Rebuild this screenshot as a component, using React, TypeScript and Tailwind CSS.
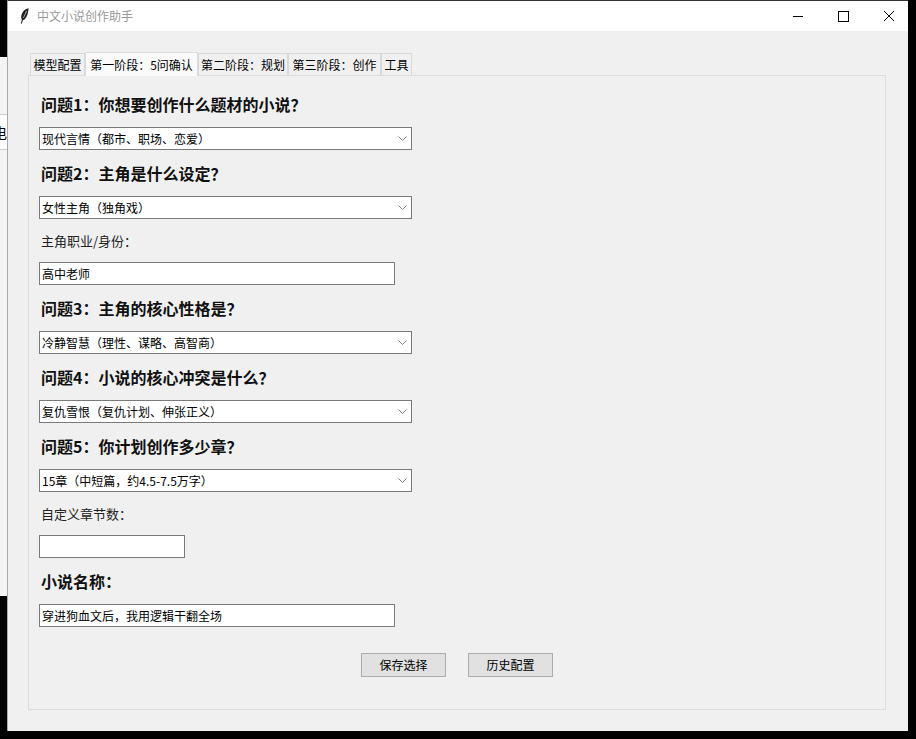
import type { ReactNode } from 'react';

const font = { cjk: 'font-["Noto_Sans_CJK_SC","Liberation_Sans",sans-serif]' };

function Heading({ children }: { children: ReactNode }) {
  return <div className="h-[22px] mt-[12px] mb-[12px] ml-[2px] text-[16px] leading-[22px] font-bold text-[#111]">{children}</div>;
}

function Label({ children }: { children: ReactNode }) {
  return <div className="h-[18px] mt-[13px] mb-[12px] ml-[2px] text-[13px] leading-[18px] text-[#222]">{children}</div>;
}

function Select({ value }: { value: string }) {
  return (
    <div className="w-[373px] h-[23px] shrink-0 flex items-center justify-between bg-white border border-[#7a7a7a] pl-[2px] pr-[4px] text-[12px] text-black">
      <span>{value}</span>
      <svg width="9" height="5" viewBox="0 0 9 5" fill="none" stroke="#808080" strokeWidth="1">
        <path d="M0.5 0.5 L4.5 4.5 L8.5 0.5" />
      </svg>
    </div>
  );
}

function Input({ value, width }: { value?: string; width: string }) {
  return (
    <div className={`${width} h-[23px] shrink-0 flex items-center bg-white border border-[#7a7a7a] pl-[2px] text-[12px] text-black`}>
      {value}
    </div>
  );
}

function Tab({ label, width, active }: { label: string; width: string; active?: boolean }) {
  if (active) {
    return (
      <div className={`${width} h-[24px] flex items-center justify-center bg-[#fafafa] border border-b-0 border-[#dcdcdc] text-[12px] text-black -mb-[1px] relative`}>
        {label}
      </div>
    );
  }
  return (
    <div className={`${width} h-[22px] flex items-center justify-center bg-[#f0f0f0] border border-b-0 border-[#d9d9d9] text-[12px] text-black`}>
      {label}
    </div>
  );
}

function Feather() {
  return (
    <svg width="10" height="16" viewBox="0 0 10 16">
      <path d="M8.6 0.3 C5 1 2.4 3.6 1.5 7 C1 8.9 1.2 10.6 1.9 11.8 L0.9 15.6 L1.8 15.8 L2.9 12.3 C5.3 11.6 7 8.6 7.8 5.2 C8.2 3.4 8.6 1.8 8.6 0.3 Z" fill="#222" />
      <path d="M6.6 3 L3.4 10" stroke="#ddd" strokeWidth="0.7" fill="none" />
    </svg>
  );
}

function Button({ label }: { label: string }) {
  return (
    <div className="w-[85px] h-[24px] flex items-center justify-center bg-[#e1e1e1] border border-[#adadad] text-[12px] text-black">
      {label}
    </div>
  );
}

export default function App() {
  return (
    <div className={`w-[916px] h-[739px] bg-black flex overflow-hidden ${font.cjk}`}>
      {/* what is left of the window behind */}
      <div className="w-[7px] shrink-0 flex flex-col">
        <div className="h-[115px] bg-[#000] flex flex-col justify-end">
          <div className="h-[58px] bg-[#f5f5f5] border-b border-[#cccccc]" />
        </div>
        <div className="h-[35px] bg-white overflow-hidden flex items-center justify-end border-b border-[#cccccc] text-[14px] text-black">
          <span className="shrink-0">电</span>
        </div>
        <div className="h-[446px] bg-[#f5f5f5]" />
      </div>

      <div className="w-[901px] h-[731px] shrink-0 flex flex-col bg-[#f0f0f0] border-l border-[#a8a8a8] border-t border-t-[#333]">
        {/* title bar */}
        <div className="h-[30px] shrink-0 bg-white flex items-center pl-[12px] pr-[14px]">
          <Feather />
          <span className="ml-[7px] text-[12px] text-[#999]">中文小说创作助手</span>
          <div className="ml-auto flex items-center gap-[35px]">
            <div className="w-[10px] h-[1px] bg-black" />
            <div className="w-[11px] h-[11px] border border-black" />
            <svg width="10" height="10" viewBox="0 0 10 10" stroke="black" strokeWidth="1">
              <path d="M0 0 L10 10 M10 0 L0 10" />
            </svg>
          </div>
        </div>

        {/* tabs */}
        <div className="mt-[20px] ml-[22px] h-[24px] flex items-end">
          <Tab label="模型配置" width="w-[55px]" />
          <Tab label="第一阶段：5问确认" width="w-[113px]" active />
          <Tab label="第二阶段：规划" width="w-[90px]" />
          <Tab label="第三阶段：创作" width="w-[93px]" />
          <Tab label="工具" width="w-[31px]" />
        </div>

        {/* tab panel */}
        <div className="ml-[20px] w-[858px] h-[635px] border border-[#dcdcdc] pl-[10px] flex flex-col">
          <div className="h-[5px] shrink-0" />
          <Heading>问题1：你想要创作什么题材的小说？</Heading>
          <Select value="现代言情（都市、职场、恋爱）" />
          <Heading>问题2：主角是什么设定？</Heading>
          <Select value="女性主角（独角戏）" />
          <Label>主角职业/身份：</Label>
          <Input value="高中老师" width="w-[356px]" />
          <Heading>问题3：主角的核心性格是？</Heading>
          <Select value="冷静智慧（理性、谋略、高智商）" />
          <Heading>问题4：小说的核心冲突是什么？</Heading>
          <Select value="复仇雪恨（复仇计划、伸张正义）" />
          <Heading>问题5：你计划创作多少章？</Heading>
          <Select value="15章（中短篇，约4.5-7.5万字）" />
          <Label>自定义章节数：</Label>
          <Input width="w-[146px]" />
          <Heading>小说名称：</Heading>
          <Input value="穿进狗血文后，我用逻辑干翻全场" width="w-[356px]" />
          <div className="mt-[26px] ml-[322px] flex gap-[22px]">
            <Button label="保存选择" />
            <Button label="历史配置" />
          </div>
        </div>
      </div>
    </div>
  );
}
